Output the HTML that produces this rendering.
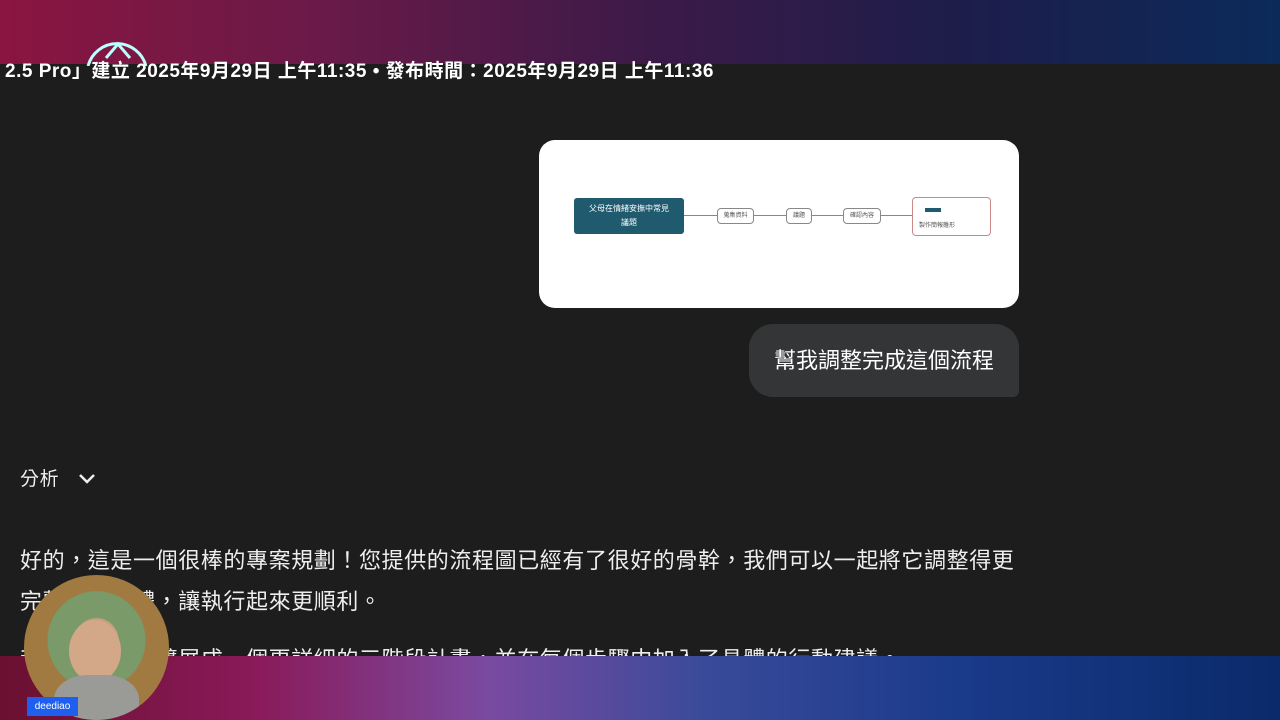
<!DOCTYPE html>
<html><head><meta charset="utf-8"><style>
body{margin:0;width:1280px;height:720px;overflow:hidden;background:#1d1d1d;font-family:"Liberation Sans","Noto Sans CJK TC",sans-serif;color:#e8e8e8;position:relative}
.top{position:absolute;left:0;top:0;width:1280px;height:64px;background:linear-gradient(90deg,#8a1540 0%,#6a1a48 25%,#3d1a48 50%,#1d1d4a 75%,#0b2a5a 100%)}
.bot{position:absolute;left:0;top:656px;width:1280px;height:64px;background:linear-gradient(90deg,#6a1030 0%,#8a1a5a 20%,#7a4aa0 38%,#3a4a9a 55%,#1a3a8a 75%,#0a2a6a 100%)}
.hdr{position:absolute;left:5px;top:56px;font-size:19px;color:#fff;font-weight:bold;white-space:nowrap;letter-spacing:0.5px}
.card{position:absolute;left:539px;top:140px;width:480px;height:168px;background:#fff;border-radius:16px}
.bub{position:absolute;left:749px;top:324px;width:270px;height:73px;background:#333537;border-radius:24px 24px 6px 24px;font-size:22px;color:#fff;line-height:73px;text-align:center}
.t{position:absolute;left:20px;font-size:22px;color:#eee;white-space:nowrap;letter-spacing:0.6px}
.box{position:absolute;border:1px solid #888;border-radius:4px;font-size:6px;color:#555;text-align:center;background:#fff}
</style></head><body>
<div class="top"></div>
<svg style="position:absolute;left:84px;top:40px" width="66" height="26"><path d="M4 26 A30 30 0 0 1 62 26" fill="none" stroke="#bff" stroke-width="3"/><path d="M22 18 L34 4 L46 18" fill="none" stroke="#bff" stroke-width="3"/></svg>
<div class="hdr">2.5 Pro」建立 2025年9月29日 上午11:35 • 發布時間：2025年9月29日 上午11:36</div>
<div class="card">
 <div style="position:absolute;left:35px;top:58px;width:110px;height:36px;background:#1f5a6e;border-radius:3px;color:#fff;font-size:8px;text-align:center;line-height:14px;padding-top:4px;box-sizing:border-box">父母在情緒安撫中常見<br>議題</div>
 <div style="position:absolute;left:145px;top:75px;width:230px;height:1px;background:#888"></div>
 <div class="box" style="left:178px;top:68px;width:35px;height:14px;line-height:14px">蒐集資料</div>
 <div class="box" style="left:247px;top:68px;width:24px;height:14px;line-height:14px">議題</div>
 <div class="box" style="left:304px;top:68px;width:36px;height:14px;line-height:14px">確認內容</div>
 <div class="box" style="left:373px;top:57px;width:77px;height:37px;border-color:#c88;text-align:left"><div style="margin:10px 0 0 12px;width:16px;height:4px;background:#1f5a6e"></div><div style="margin:8px 0 0 6px">製作簡報雛形</div></div>
</div>
<div class="bub">幫我調整完成這個流程</div>
<div class="t" style="top:464px;font-size:19px">分析 <svg width="20" height="14" style="margin-left:12px"><path d="M3 4 L10 11 L17 4" fill="none" stroke="#eee" stroke-width="2.5"/></svg></div>
<div class="t" style="top:543px">好的，這是一個很棒的專案規劃！您提供的流程圖已經有了很好的骨幹，我們可以一起將它調整得更</div>
<div class="t" style="top:584px">完整、更具體，讓執行起來更順利。</div>
<div class="t" style="top:642px">我將您的流程擴展成一個更詳細的三階段計畫，並在每個步驟中加入了具體的行動建議。</div>
<div class="bot"></div>
<div style="position:absolute;left:24px;top:575px;width:145px;height:145px;border-radius:50%;background:radial-gradient(circle at 50% 45%,#c9a080 0 20%,#7a9a6a 21% 45%,#a07a40 46%);overflow:hidden"><div style="position:absolute;left:45px;top:45px;width:52px;height:62px;border-radius:50%;background:#d2a888"></div><div style="position:absolute;left:30px;top:100px;width:85px;height:60px;border-radius:40%;background:#9a9a96"></div></div>
<div style="position:absolute;left:27px;top:697px;width:51px;height:19px;background:#1f5ff0;color:#fff;font-size:10px;line-height:19px;text-align:center">deediao</div>
</body></html>
